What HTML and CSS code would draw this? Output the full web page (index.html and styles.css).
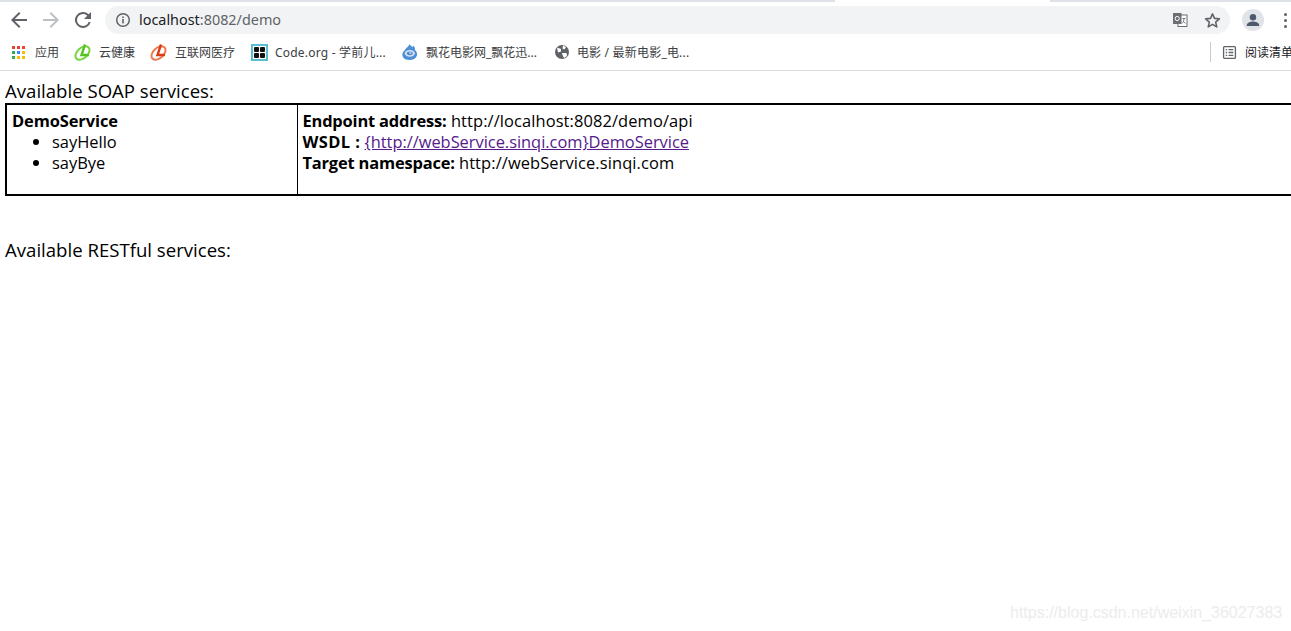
FILE: index.html
```html
<!DOCTYPE html>
<html lang="en">
<head>
<meta charset="utf-8">
<title>CXF - Service list</title>
<link rel="stylesheet" href="styles.css">
</head>
<body>
<header class="chrome">
  <div class="tabstrip"><div class="tab-bg tab-left"></div><div class="tab-active"></div><div class="tab-bg"></div></div>
  <div class="toolbar">
    <svg class="nav" viewBox="0 0 24 24" width="24" height="24"><path class="nav-back" d="M20 11H7.800l5.600-5.600L12 4l-8 8 8 8 1.400-1.400L7.800 13H20z"/></svg>
    <svg class="nav" viewBox="0 0 24 24" width="24" height="24"><path class="nav-fwd" d="M12 4l-1.400 1.400 5.600 5.600H4v2h12.200l-5.600 5.600L12 20l8-8z"/></svg>
    <svg class="nav" viewBox="0 0 24 24" width="24" height="24"><path class="nav-back" d="M17.650 6.350A8 8 0 1 0 19.730 14h-2.080A6 6 0 1 1 12 6c1.660 0 3.140.69 4.220 1.780L13 11h7V4z"/></svg>
    <div class="omnibox">
      <svg class="info" viewBox="0 0 16 16" width="16" height="16"><circle cx="8" cy="8" r="6.300" fill="none" stroke="#5f6368" stroke-width="1.500"/><rect x="7.200" y="7" width="1.600" height="4.400" fill="#5f6368"/><rect x="7.200" y="4.500" width="1.600" height="1.600" fill="#5f6368"/></svg>
      <span class="url"><span class="host">localhost</span>:8082/demo</span>
      <svg class="translate" viewBox="0 0 16 16" width="16" height="16"><rect x="6" y="3" width="9" height="11.500" fill="#fff" stroke="#6b6e72"/><rect x="1" y="1" width="8.500" height="11" fill="#6b6e72"/><circle cx="5.200" cy="6.500" r="2.100" fill="none" stroke="#fff"/><path d="M10.500 6.500h3M12 6.500c0 2.500-1 4-2 5M11 9l2.500 2.500" fill="none" stroke="#6b6e72" stroke-width=".9"/></svg>
      <svg class="star" viewBox="0 0 24 24" width="19" height="19"><path d="M12 3.600l2.500 5.700 6.200.6-4.700 4.100 1.400 6.100-5.400-3.200-5.400 3.200 1.400-6.100-4.700-4.100 6.200-.6z" fill="none" stroke="#5f6368" stroke-width="2" stroke-linejoin="round"/></svg>
    </div>
    <svg class="avatar" viewBox="0 0 22 22" width="22" height="22"><circle cx="11" cy="11" r="11" fill="#e0e3e8"/><circle cx="11" cy="8.300" r="3.200" fill="#4d5a6b"/><path d="M4.800 16.200c0-2.600 4-3.700 6.200-3.700s6.200 1.100 6.200 3.700v.8H4.800z" fill="#4d5a6b"/></svg>
    <div class="menu"><i></i><i></i><i></i></div>
  </div>
  <nav class="bookmarks">
    <a class="bm bm-apps">
      <span class="grid">
        <i class="r"></i><i class="r"></i><i class="r"></i>
        <i class="g"></i><i class="b"></i><i class="y"></i>
        <i class="g"></i><i class="y"></i><i class="y"></i>
      </span>
      <span>应用</span>
    </a>
    <a class="bm bm-health">
      <svg viewBox="0 0 18 18" width="18" height="18"><ellipse cx="8.500" cy="10" rx="8.200" ry="5.200" transform="rotate(-42 8.500 10)" fill="none" stroke="#76d43c" stroke-width="2"/><path d="M11 1.500L7.500 12H15" fill="none" stroke="#57c022" stroke-width="2.400"/></svg>
      <span>云健康</span>
    </a>
    <a class="bm bm-health bm-red">
      <svg viewBox="0 0 18 18" width="18" height="18"><ellipse cx="8.500" cy="10" rx="8.200" ry="5.200" transform="rotate(-42 8.500 10)" fill="none" stroke="#ee7a4e" stroke-width="2"/><path d="M11 1.500L7.500 12H15" fill="none" stroke="#dc3a18" stroke-width="2.400"/></svg>
      <span>互联网医疗</span>
    </a>
    <a class="bm bm-code">
      <span class="code"><i></i><i></i><i></i><i></i></span>
      <span class="latin">Code.org - 学前儿...</span>
    </a>
    <a class="bm bm-flower">
      <svg viewBox="0 0 16 16" width="16" height="16"><path d="M7.500 0c.5 1.500 2 1.800 3 3 .5-.3 1-.8 1-1.500 1.500 1.500 1.500 3.500 1.500 4.500 1.500 1.500 2.500 3.500 2 5.500-1 3-4 4.500-7.500 4.500-3 0-6-1-7-4-.6-2.500.5-4.500 2.500-6C3.500 4 6.500 3 7.500 0z" fill="#4f8fd6"/><ellipse cx="7.800" cy="9.300" rx="5" ry="3.400" fill="#d5e4f3"/><ellipse cx="7.800" cy="9.300" rx="3" ry="1.900" fill="#4a86c8"/><ellipse cx="8.300" cy="9" rx="1.400" ry=".8" fill="#d5e4f3"/></svg>
      <span>飘花电影网_飘花迅...</span>
    </a>
    <a class="bm">
      <svg viewBox="0 0 16 16" width="16" height="16"><circle cx="8" cy="8" r="7" fill="#5f6368"/><path d="M3 3.500l4 1.500 0 2.500-3 1zM9 1.500l3 1.500-1.500 2.500-2-1zM8 9l4.500 0 .5 3-3 2-1.500-3z" fill="#fff"/></svg>
      <span class="latin">电影 / 最新电影_电...</span>
    </a>
    <div class="reading">
      <svg viewBox="0 0 16 16" width="15" height="15"><rect x="1.700" y="1.700" width="12.600" height="12.600" rx="1" fill="none" stroke="#5f6368" stroke-width="1.400"/><path d="M4 5h1.500M7 5h5M4 8h1.500M7 8h5M4 11h1.500M7 11h5" stroke="#5f6368" stroke-width="1.400"/></svg>
      <span>阅读清单</span>
    </div>
  </nav>
</header>
<main class="page">
  <div class="services-title">Available SOAP services:</div>
  <table class="services">
    <tr>
      <td class="porttypes">
        <span class="porttypename">DemoService</span>
        <ul>
          <li>sayHello</li>
          <li>sayBye</li>
        </ul>
      </td>
      <td class="addressinfo">
        <div><b>Endpoint address:</b> <span class="value">http://localhost:8082/demo/api</span></div>
        <div><b class="wsdl">WSDL :</b> <a href="#">{http://webService.sinqi.com}DemoService</a></div>
        <div><b>Target namespace:</b> <span class="value">http://webService.sinqi.com</span></div>
      </td>
    </tr>
  </table>
  <div class="services-title rest">Available RESTful services:</div>
</main>
<div class="watermark">https://blog.csdn.net/weixin_36027383</div>
</body>
</html>
```
FILE: styles.css
```css
html, body {
  margin: 0;
  padding: 0;
  height: 631px;
  overflow: hidden;
  background: #fff;
}
body {
  font-family: "Open Sans", "Noto Sans CJK SC", sans-serif;
  color: #000;
}
.chrome {
  height: 71px;
  border-bottom: 1px solid #dadce0;
  box-sizing: border-box;
  font-family: "Noto Sans", "Noto Sans CJK SC", sans-serif;
}
.tabstrip {
  display: flex;
  height: 2px;
}
.tab-bg {
  flex: 1;
  background: #dee1e6;
}
.tab-left {
  flex: none;
  width: 835px;
}
.tab-active {
  width: 215px;
  background: #fff;
}
.toolbar {
  display: flex;
  align-items: center;
  height: 32px;
  padding: 4px 0 0 7px;
  box-sizing: border-box;
}
.nav { margin-right: 8px; flex: none; }
.nav-back { fill: #5f6368; }
.nav-fwd { fill: #bdc1c6; }
.omnibox {
  flex: none;
  width: 1125px;
  height: 28px;
  margin-left: 2px;
  border-radius: 14px;
  background: #f1f3f4;
  display: flex;
  align-items: center;
  padding: 0 8px 0 10px;
  box-sizing: border-box;
}
.info { flex: none; }
.url {
  margin-left: 8px;
  padding-bottom: 2px;
  font-size: 14.400px;
  color: #5f6368;
  flex: 1;
  font-family: "Noto Sans", sans-serif;
}
.host { color: #202124; }
.translate { margin-right: 15px; }
.avatar { margin-left: 12px; flex: none; }
.menu {
  margin-left: 20px;
  display: flex;
  flex-direction: column;
  gap: 3px;
}
.menu i {
  display: block;
  width: 3px;
  height: 3px;
  border-radius: 50%;
  background: #5f6368;
}
.bookmarks {
  display: flex;
  align-items: center;
  height: 36px;
  padding-left: 12px;
  font-size: 12px;
  color: #3c4043;
  white-space: nowrap;
  overflow: hidden;
}
.bm {
  display: flex;
  align-items: center;
  gap: 7px;
  margin-right: 16px;
}
.bm-apps { gap: 8px; margin-right: 15px; }
.bm-health { margin-right: 15px; }
.bm-red { margin-right: 16px; }
.bm-code { margin-right: 16px; }
.bm-flower { gap: 8px; margin-right: 17px; }
.latin { letter-spacing: .2px; }
.bm svg { flex: none; }
.grid {
  display: grid;
  grid-template-columns: repeat(3, 3px);
  grid-auto-rows: 3px;
  gap: 2px;
  width: 13px;
  margin-right: 2px;
}
.grid i { display: block; }
.grid .r { background: #ea4335; }
.grid .g { background: #34a853; }
.grid .b { background: #4285f4; }
.grid .y { background: #fbbc05; }
.code {
  display: grid;
  grid-template-columns: repeat(2, 5px);
  grid-auto-rows: 5px;
  gap: 1px;
  padding: 1px;
  border: 2px solid #59bfd0;
  width: 11px;
  height: 11px;
  flex: none;
}
.code i { background: #111; border-radius: 1px; }
.reading {
  margin-left: auto;
  margin-right: -2px;
  flex: none;
  height: 20px;
  display: flex;
  align-items: center;
  gap: 8px;
  padding-left: 11px;
  border-left: 1px solid #c8cacd;
  color: #202124;
}
.page {
  padding: 9px 0 0 5px;
  width: 1500px;
}
.services-title {
  line-height: 22px;
  font-size: 18.600px;
}
.services {
  width: 1500px;
  border-collapse: collapse;
  border: 2px solid #000;
  font-size: 16.450px;
  line-height: 21px;
  margin-top: 1px;
}
.services td {
  vertical-align: top;
  padding: 5px 5px 0;
  height: 91px;
  box-sizing: border-box;
}
.porttypes {
  width: 291px;
  border-right: 1px solid #000;
}
.porttypename { font-weight: 700; letter-spacing: -.1px; }
.services b { letter-spacing: -.18px; }
.services b.wsdl { letter-spacing: .4px; }
.value { letter-spacing: .1px; }
.services ul {
  margin: 0;
  padding: 0 0 0 40px;
}
.services a { color: #551a8b; letter-spacing: -.03px; }
.rest { margin-top: 43px; }
.watermark {
  position: absolute;
  left: 1010px;
  top: 604px;
  font-family: "Liberation Sans", sans-serif;
  font-size: 16px;
  color: #ececec;
}
```
